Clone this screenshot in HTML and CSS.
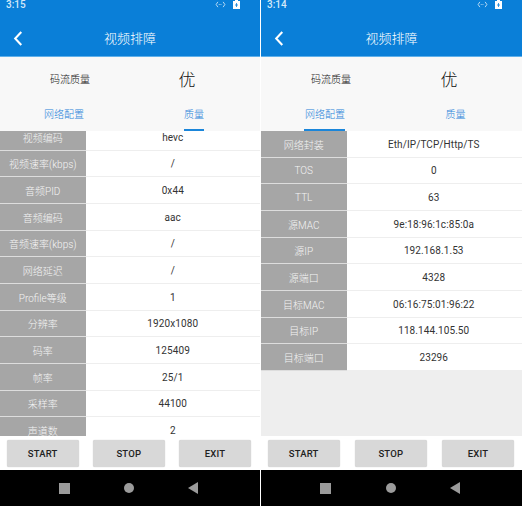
FILE: index.html
```html
<!DOCTYPE html>
<html lang="zh">
<head>
<meta charset="utf-8">
<title>视频排障</title>
<link rel="stylesheet" href="styles.css">
</head>
<body>
<div class="screens">
  <section class="phone phone-left">
    <div class="appbar">
      <div class="status"><span>3:15</span><span class="status-icons"><svg class="vpn" viewBox="0 0 12 8"><path d="M3 1 1 4l2 3M9 1l2 3-2 3" fill="none" stroke="#cfe6f7" stroke-width="1"/><path d="M4 4h4" stroke="#cfe6f7" stroke-dasharray="1 1"/></svg><svg class="batt" viewBox="0 0 7 9"><path d="M2 0h3v1h2v8H0V1h2z" fill="#fff"/><path d="M3.5 3v4M2 5h3" stroke="#0a7fd8" stroke-width=".8"/></svg></span></div>
      <div class="titlebar"><svg class="back" viewBox="0 0 10 16"><path d="M8.5 1 2 8l6.500 7" fill="none" stroke="#fff" stroke-width="2.200"/></svg><h1>视频排障</h1></div>
    </div>
    <div class="summary"><span class="sum-label">码流质量</span><span class="sum-value">优</span></div>
    <div class="tabs"><div class="tab">网络配置</div><div class="tab active">质量</div></div>
    <div class="list">
      <div class="rows scrolled">
        <div class="row"><div class="key">视频编码</div><div class="val">hevc</div></div>
        <div class="row"><div class="key">视频速率(kbps)</div><div class="val">/</div></div>
        <div class="row"><div class="key">音频PID</div><div class="val">0x44</div></div>
        <div class="row"><div class="key">音频编码</div><div class="val">aac</div></div>
        <div class="row"><div class="key">音频速率(kbps)</div><div class="val">/</div></div>
        <div class="row"><div class="key">网络延迟</div><div class="val">/</div></div>
        <div class="row"><div class="key">Profile等级</div><div class="val">1</div></div>
        <div class="row"><div class="key">分辨率</div><div class="val">1920x1080</div></div>
        <div class="row"><div class="key">码率</div><div class="val">125409</div></div>
        <div class="row"><div class="key">帧率</div><div class="val">25/1</div></div>
        <div class="row"><div class="key">采样率</div><div class="val">44100</div></div>
        <div class="row"><div class="key">声道数</div><div class="val">2</div></div>
      </div>
    </div>
    <div class="actions"><button>START</button><button>STOP</button><button>EXIT</button></div>
    <div class="navbar"><span class="nav-square"></span><span class="nav-circle"></span><svg class="nav-back" viewBox="0 0 10 12"><path d="M10 0v12L0 6z" fill="#9b9b9b"/></svg></div>
  </section>
  <section class="phone phone-right">
    <div class="appbar">
      <div class="status"><span>3:14</span><span class="status-icons"><svg class="vpn" viewBox="0 0 12 8"><path d="M3 1 1 4l2 3M9 1l2 3-2 3" fill="none" stroke="#cfe6f7" stroke-width="1"/><path d="M4 4h4" stroke="#cfe6f7" stroke-dasharray="1 1"/></svg><svg class="batt" viewBox="0 0 7 9"><path d="M2 0h3v1h2v8H0V1h2z" fill="#fff"/><path d="M3.5 3v4M2 5h3" stroke="#0a7fd8" stroke-width=".8"/></svg></span></div>
      <div class="titlebar"><svg class="back" viewBox="0 0 10 16"><path d="M8.5 1 2 8l6.500 7" fill="none" stroke="#fff" stroke-width="2.200"/></svg><h1>视频排障</h1></div>
    </div>
    <div class="summary"><span class="sum-label">码流质量</span><span class="sum-value">优</span></div>
    <div class="tabs"><div class="tab active">网络配置</div><div class="tab">质量</div></div>
    <div class="list">
      <div class="rows">
        <div class="row"><div class="key">网络封装</div><div class="val">Eth/IP/TCP/Http/TS</div></div>
        <div class="row"><div class="key">TOS</div><div class="val">0</div></div>
        <div class="row"><div class="key">TTL</div><div class="val">63</div></div>
        <div class="row"><div class="key">源MAC</div><div class="val">9e:18:96:1c:85:0a</div></div>
        <div class="row"><div class="key">源IP</div><div class="val">192.168.1.53</div></div>
        <div class="row"><div class="key">源端口</div><div class="val">4328</div></div>
        <div class="row"><div class="key">目标MAC</div><div class="val">06:16:75:01:96:22</div></div>
        <div class="row"><div class="key">目标IP</div><div class="val">118.144.105.50</div></div>
        <div class="row"><div class="key">目标端口</div><div class="val">23296</div></div>
      </div>
    </div>
    <div class="actions"><button>START</button><button>STOP</button><button>EXIT</button></div>
    <div class="navbar"><span class="nav-square"></span><span class="nav-circle"></span><svg class="nav-back" viewBox="0 0 10 12"><path d="M10 0v12L0 6z" fill="#9b9b9b"/></svg></div>
  </section>
</div>
</body>
</html>
```
FILE: styles.css
```css
* { box-sizing: border-box; }
html, body { margin: 0; padding: 0; background: #fff; }
body { width: 522px; height: 506px; overflow: hidden; font-family: Roboto, "Noto Sans CJK SC", sans-serif; }
.screens { display: flex; gap: 1px; height: 506px; }
.phone { display: flex; flex-direction: column; height: 506px; }
.phone-left { width: 260px; }
.phone-right { width: 261px; }

.appbar { height: 57px; background: #0a7fd8; color: #fff; border-bottom: 1px solid #5fb0ea; }
.status { height: 20px; display: flex; justify-content: space-between; align-items: flex-start; padding: 0 20px 0 6px; font-size: 10px; line-height: 10px; color: #d5e9f8; font-weight: 500; }
.status-icons { display: flex; align-items: center; gap: 7px; }
.vpn { width: 11px; height: 7px; }
.batt { width: 7px; height: 9px; }
.titlebar { height: 36px; display: flex; align-items: center; justify-content: center; position: relative; padding-top: 2px; }
.back { position: absolute; left: 13px; top: 11px; width: 10px; height: 15px; }
.titlebar h1 { margin: 0; font-size: 13px; font-weight: 300; line-height: 34px; color: #fff; }

.summary { height: 41px; background: #f8f8f8; display: grid; grid-template-columns: 140px 94px; align-items: center; justify-items: center; padding-top: 2px; }
.sum-label { font-size: 10px; font-weight: 300; color: #111; }
.sum-value { font-size: 17px; font-weight: 300; color: #111; }
.phone-right .sum-value { padding-left: 2px; }

.tabs { height: 33px; background: #f8f8f8; display: grid; grid-template-columns: 128px 1fr; padding-top: 1px; }
.tab { position: relative; font-size: 10px; font-weight: 300; color: #1f82d8; text-align: center; line-height: 32px; }
.tab.active::after { content: ""; position: absolute; left: 50%; bottom: 0; width: 20px; height: 2px; margin-left: -10px; background: #1b86da; }
.phone-right .tab.active::after { width: 41px; margin-left: -21px; }

.list { height: 305px; overflow: hidden; background: #eee; }
.rows { display: flex; flex-direction: column; }
.scrolled { margin-top: -7px; }
.row { display: grid; grid-template-columns: 85.500px 1fr; height: 26.670px; background: #fff; border-bottom: 1px solid #eee; }
.key { background: #a6a6a6; color: #f4f4f4; font-size: 10px; font-weight: 300; display: flex; align-items: center; justify-content: center; white-space: nowrap; border-bottom: 1px solid #ddd; margin-bottom: -1px; padding-top: 1px; }
.val { color: #333; font-size: 10px; display: flex; align-items: center; justify-content: center; letter-spacing: .1px; padding-top: 1px; }
.phone-right .val { padding-right: 1px; }

.actions { height: 34px; background: #fff; display: flex; justify-content: space-between; padding: 4px 9px 3px 6.700px; }
.phone-right .actions { padding: 4px 8px 3px 6.700px; }
.actions button { width: 72px; height: 27px; padding: 0; background: #d8d8d8; border: 0; border-radius: 2px; color: #222; font-family: Roboto, sans-serif; font-size: 9.500px; font-weight: 500; letter-spacing: .2px; box-shadow: 0 0 1px #bbb; }

.navbar { height: 36px; background: #000; display: flex; align-items: center; justify-content: space-between; padding: 0 62px 0 59px; }
.nav-square { width: 11px; height: 11px; background: #9b9b9b; }
.nav-circle { width: 10px; height: 10px; border-radius: 50%; background: #9b9b9b; }
.nav-back { width: 10px; height: 12px; }
```
